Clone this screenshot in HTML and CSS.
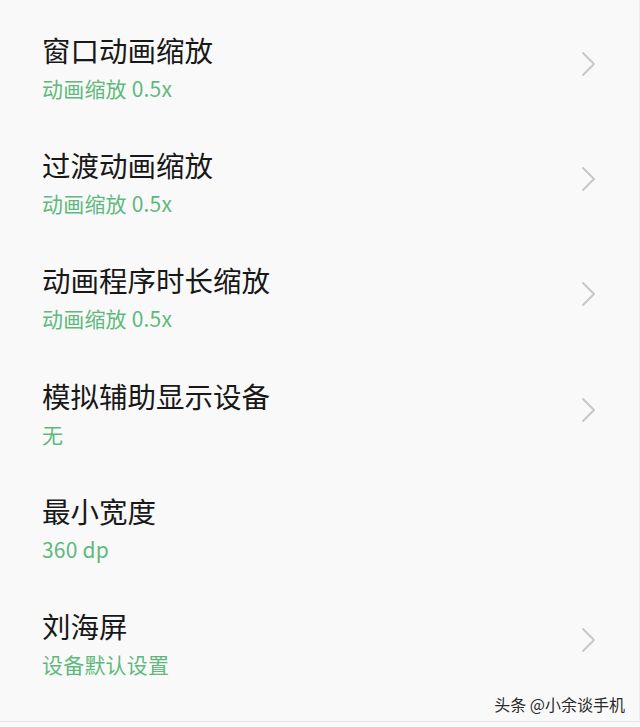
FILE: index.html
```html
<!DOCTYPE html>
<html lang="zh-CN">
<head>
<meta charset="utf-8">
<title>开发者选项</title>
<link rel="stylesheet" href="styles.css">
</head>
<body>
<div class="screen">
  <ul class="list">
    <li class="row">
      <div class="text"><div class="title">窗口动画缩放</div><div class="value">动画缩放 0.5x</div></div>
      <svg class="chev" viewBox="0 0 16 26"><path d="M2 2 L13 13 L2 24"/></svg>
    </li>
    <li class="row">
      <div class="text"><div class="title">过渡动画缩放</div><div class="value">动画缩放 0.5x</div></div>
      <svg class="chev" viewBox="0 0 16 26"><path d="M2 2 L13 13 L2 24"/></svg>
    </li>
    <li class="row">
      <div class="text"><div class="title">动画程序时长缩放</div><div class="value">动画缩放 0.5x</div></div>
      <svg class="chev" viewBox="0 0 16 26"><path d="M2 2 L13 13 L2 24"/></svg>
    </li>
    <li class="row">
      <div class="text"><div class="title">模拟辅助显示设备</div><div class="value">无</div></div>
      <svg class="chev" viewBox="0 0 16 26"><path d="M2 2 L13 13 L2 24"/></svg>
    </li>
    <li class="row">
      <div class="text"><div class="title">最小宽度</div><div class="value">360 dp</div></div>
    </li>
    <li class="row">
      <div class="text"><div class="title">刘海屏</div><div class="value">设备默认设置</div></div>
      <svg class="chev" viewBox="0 0 16 26"><path d="M2 2 L13 13 L2 24"/></svg>
    </li>
  </ul>
  <div class="watermark">头条 @小余谈手机</div>
</div>
</body>
</html>
```
FILE: styles.css
```css
html, body {
  margin: 0;
  padding: 0;
  background: #f9f9f9;
}
body {
  font-family: "Noto Sans CJK SC", "Noto Sans", sans-serif;
}
.screen {
  position: relative;
  width: 639px;
  height: 721px;
  border-right: 1px solid #ececec;
  border-bottom: 1px solid #e4e4e4;
  background: #f9f9f9;
  overflow: hidden;
}
.list {
  list-style: none;
  margin: 0;
  padding: 0;
}
.row {
  display: flex;
  align-items: center;
  height: 115.4px;
  box-sizing: border-box;
  padding: 31.5px 42px 13.9px 42px;
}
.text {
  flex: 1;
  display: flex;
  flex-direction: column;
  gap: 6px;
}
.title {
  font-size: 28.5px;
  line-height: 36px;
  color: #181818;
}
.value {
  font-size: 21px;
  line-height: 28px;
  color: #5eb97c;
  letter-spacing: 0.2px;
}
.chev {
  width: 16px;
  height: 26px;
  margin-bottom: 6px;
  fill: none;
  stroke: #c6c6c6;
  stroke-width: 1.8;
  stroke-linecap: round;
  stroke-linejoin: round;
}
.watermark {
  position: absolute;
  right: 14px;
  bottom: 6px;
  font-size: 16px;
  line-height: 22px;
  color: #2a2a2a;
  text-shadow: 0 0 2px #fff, 0 0 1px #fff;
}
```
